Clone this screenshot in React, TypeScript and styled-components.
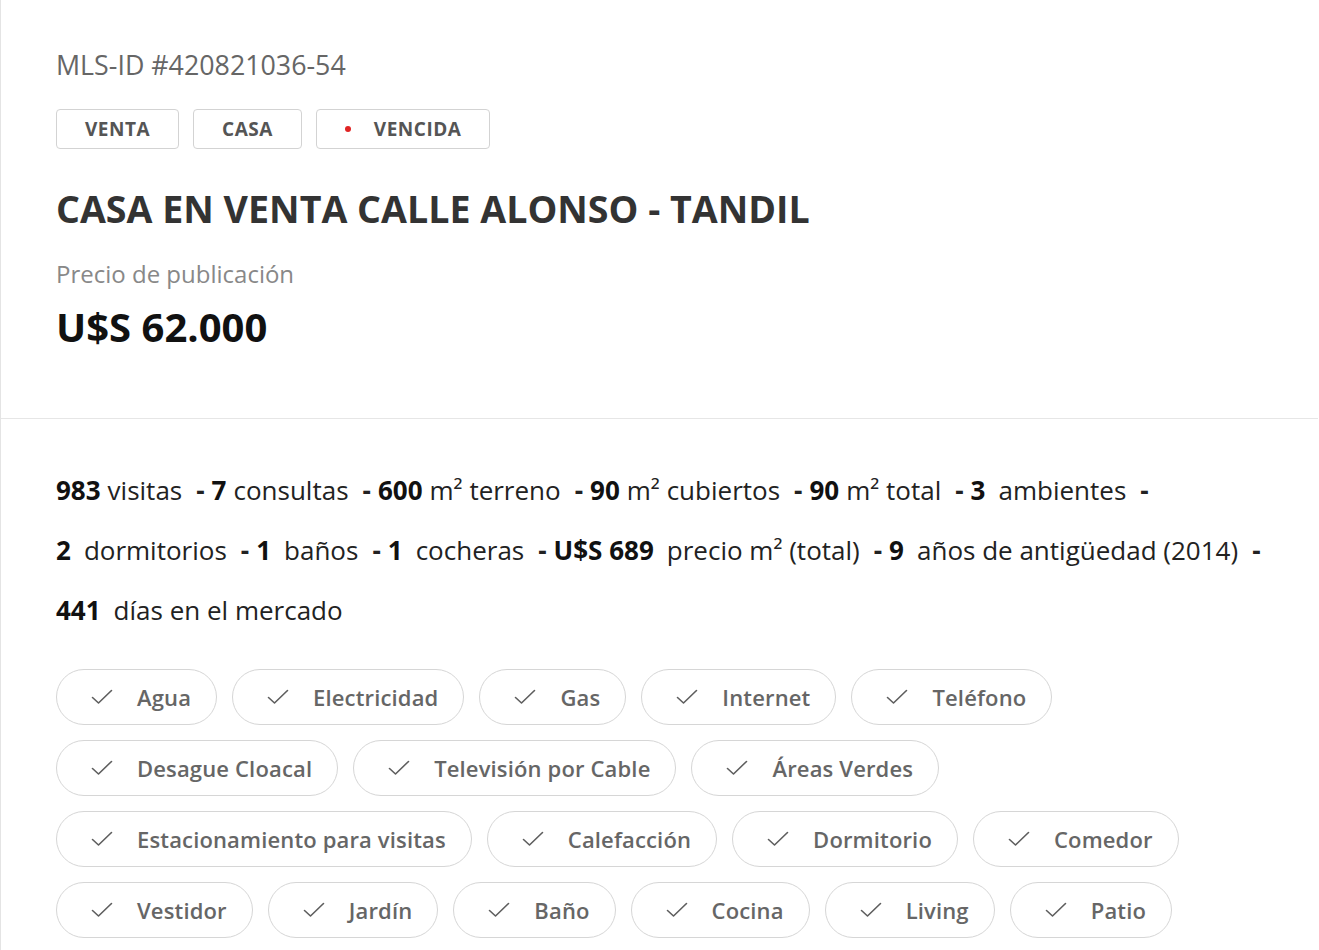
import React from 'react';
import styled, { createGlobalStyle } from 'styled-components';

const GlobalStyle = createGlobalStyle`
	html, body {
		margin: 0;
		padding: 0;
		background: #ffffff;
		font-family: 'Open Sans', 'Noto Sans', sans-serif;
	}
`;

interface IStat {
	value: string;
	label: string;
	wide?: boolean;
}

const stats: IStat[] = [
	{ value: '983', label: 'visitas' },
	{ value: '7', label: 'consultas' },
	{ value: '600', label: 'm² terreno' },
	{ value: '90', label: 'm² cubiertos' },
	{ value: '90', label: 'm² total' },
	{ value: '3', label: 'ambientes', wide: true },
	{ value: '2', label: 'dormitorios', wide: true },
	{ value: '1', label: 'baños', wide: true },
	{ value: '1', label: 'cocheras', wide: true },
	{ value: 'U$S 689', label: 'precio m² (total)', wide: true },
	{ value: '9', label: 'años de antigüedad (2014)', wide: true },
	{ value: '441', label: 'días en el mercado', wide: true },
];

const features = [
	'Agua',
	'Electricidad',
	'Gas',
	'Internet',
	'Teléfono',
	'Desague Cloacal',
	'Televisión por Cable',
	'Áreas Verdes',
	'Estacionamiento para visitas',
	'Calefacción',
	'Dormitorio',
	'Comedor',
	'Vestidor',
	'Jardín',
	'Baño',
	'Cocina',
	'Living',
	'Patio',
];

const CheckIcon = () => (
	<svg width="22" height="16" viewBox="0 0 22 16" fill="none">
		<path
			d="M1.5 8.5 L7.5 14 L20.5 1.5"
			stroke="#5e5e5e"
			strokeWidth="1.6"
			strokeLinecap="round"
			strokeLinejoin="round"
		/>
	</svg>
);

const App = () => {
	return (
		<>
			<GlobalStyle />
			<Card>
				<Header>
					<MlsId>MLS-ID #420821036-54</MlsId>
					<TagRow>
						<Tag>VENTA</Tag>
						<Tag>CASA</Tag>
						<Tag>
							<Dot />
							VENCIDA
						</Tag>
					</TagRow>
					<Title>CASA EN VENTA CALLE ALONSO - TANDIL</Title>
					<PriceLabel>Precio de publicación</PriceLabel>
					<Price>U$S 62.000</Price>
				</Header>
				<Body>
					<Stats>
						{stats.map((stat, index) => (
							<StatItem key={index}>
								<StatValue wide={stat.wide}>{stat.value}</StatValue>
								<span>{stat.label}</span>
								{index < stats.length - 1 && <Sep>-</Sep>}
							</StatItem>
						))}
					</Stats>
					<Chips>
						{features.map((feature) => (
							<Chip key={feature}>
								<CheckIcon />
								<span>{feature}</span>
							</Chip>
						))}
					</Chips>
				</Body>
			</Card>
		</>
	);
};

export default App;

const Card = styled.div`
	width: 1318px;
	min-height: 950px;
	border-left: 1px solid #e4e4e4;
	box-sizing: border-box;
`;

const Header = styled.div`
	padding: 49px 55px 68px;
	border-bottom: 1px solid #e6e6e6;
`;

const MlsId = styled.div`
	font-size: 26.8px;
	line-height: 32px;
	color: #666;
`;

const TagRow = styled.div`
	display: flex;
	gap: 14px;
	margin-top: 28px;
`;

const Tag = styled.div`
	display: flex;
	align-items: center;
	justify-content: center;
	gap: 23px;
	height: 40px;
	padding: 0 28px;
	box-sizing: border-box;
	border: 1px solid #d3d3d3;
	border-radius: 4px;
	font-size: 19px;
	font-weight: 700;
	letter-spacing: 0.5px;
	color: #555;
`;

const Dot = styled.span`
	width: 6px;
	height: 6px;
	border-radius: 50%;
	background: #e02424;
`;

const Title = styled.h1`
	margin: 37px 0 0;
	font-size: 37.6px;
	line-height: 46px;
	font-weight: 700;
	color: #333;
`;

const PriceLabel = styled.div`
	margin-top: 26px;
	font-size: 24px;
	line-height: 32px;
	color: #888;
`;

const Price = styled.div`
	margin-top: 14px;
	font-size: 40px;
	line-height: 46px;
	font-weight: 700;
	color: #111;
`;

const Body = styled.div`
	padding: 41px 55px 0;
`;

const Stats = styled.div`
	display: flex;
	flex-wrap: wrap;
	font-size: 26px;
	line-height: 60px;
	color: #222;
	width: 1230px;
`;

const StatItem = styled.span`
	display: inline-flex;
	white-space: nowrap;
`;

const StatValue = styled.b<{ wide?: boolean }>`
	font-weight: 700;
	color: #111;
	margin-right: ${(props) => (props.wide ? '13px' : '7px')};
`;

const Sep = styled.span`
	font-weight: 700;
	margin: 0 7px 0 14px;
`;

const Chips = styled.div`
	display: flex;
	flex-wrap: wrap;
	gap: 15px 15px;
	margin-top: 29px;
	width: 1150px;
`;

const Chip = styled.div`
	display: flex;
	align-items: center;
	gap: 24px;
	height: 56px;
	padding: 0 25px 0 34px;
	box-sizing: border-box;
	border: 1px solid #d6d6d6;
	border-radius: 28px;
	font-size: 22px;
	font-weight: 600;
	letter-spacing: 0.15px;
	color: #666;
`;
